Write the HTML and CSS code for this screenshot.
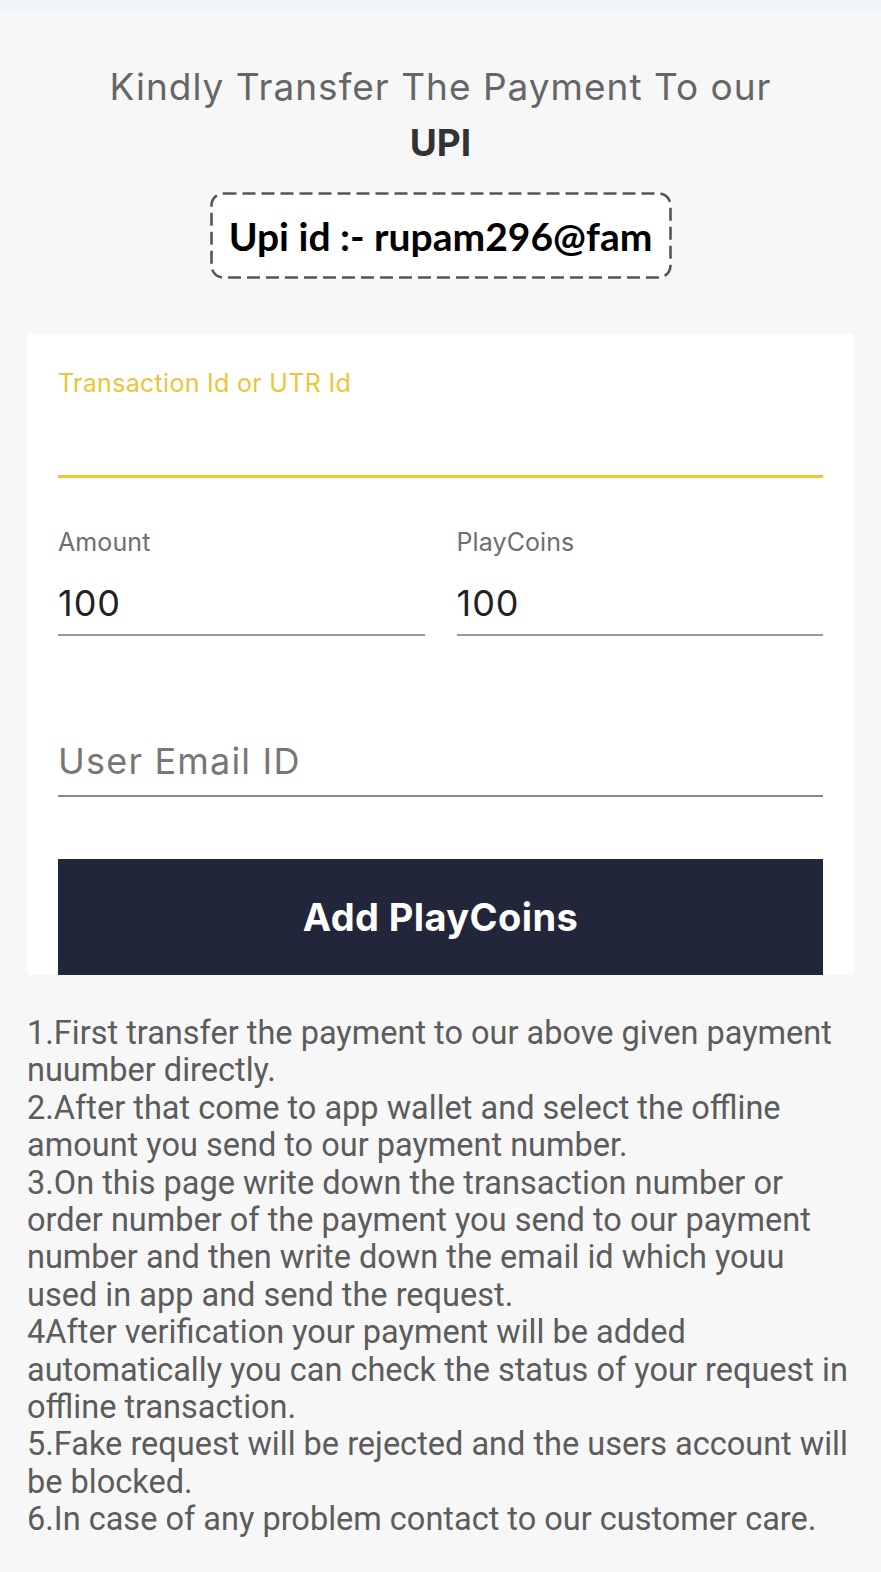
FILE: index.html
```html
<!DOCTYPE html>
<html>
<head>
<meta charset="utf-8">
<link rel="stylesheet" href="styles.css">
</head>
<body>
<div class="topbar"></div>
<main class="page">
  <h1 class="title">Kindly Transfer The Payment To our</h1>
  <h2 class="method">UPI</h2>
  <div class="upi-wrap"><div class="upi-box">Upi id :- rupam296@fam</div></div>
  <section class="card">
    <div class="field field-active">
      <label class="label label-active">Transaction Id or UTR Id</label>
    </div>
    <div class="row">
      <div class="field field-half">
        <label class="label">Amount</label>
        <div class="value">100</div>
      </div>
      <div class="field field-half">
        <label class="label">PlayCoins</label>
        <div class="value">100</div>
      </div>
    </div>
    <div class="field field-email">
      <div class="value placeholder">User Email ID</div>
    </div>
    <button class="btn">Add PlayCoins</button>
  </section>
  <div class="notes">
    <p>1.First transfer the payment to our above given payment nuumber directly.</p>
    <p>2.After that come to app wallet and select the offline amount you send to our payment number.</p>
    <p>3.On this page write down the transaction number or order number of the payment you send to our payment number and then write down the email id which youu used in app and send the request.</p>
    <p>4After verification your payment will be added automatically you can check the status of your request in offline transaction.</p>
    <p>5.Fake request will be rejected and the users account will be blocked.</p>
    <p>6.In case of any problem contact to our customer care.</p>
  </div>
</main>
</body>
</html>
```

FILE: styles.css
```css
* { box-sizing: border-box; }
html, body { margin: 0; padding: 0; }
body {
  background: #f7f7f7;
  font-family: Inter, "Noto Sans", sans-serif;
  width: 881px;
  height: 1572px;
  overflow: hidden;
}
.topbar { height: 10px; background: #f0f3f7; }
.page { padding: 0 27px; }
.title {
  margin: 49px 0 0;
  text-align: center;
  font-weight: 400;
  font-size: 37px;
  line-height: 56px;
  color: #666;
  letter-spacing: 1px;
  white-space: nowrap;
}
.method {
  margin: 0;
  text-align: center;
  font-weight: 700;
  font-size: 37px;
  line-height: 56px;
  color: #333;
}
.upi-wrap { display: flex; justify-content: center; margin-top: 21px; }
.upi-box {
  width: 462px;
  height: 87px;
  border-radius: 12px;
  background-color: #fff;
  background-image: url("data:image/svg+xml,%3Csvg xmlns='http://www.w3.org/2000/svg' width='462' height='87'%3E%3Crect x='1.5' y='1.5' width='459' height='84' rx='12' ry='12' fill='none' stroke='%23555' stroke-width='2.6' stroke-dasharray='13 6'/%3E%3C/svg%3E");
  display: flex;
  align-items: center;
  justify-content: center;
  font-family: Lato, sans-serif;
  font-weight: 700;
  font-size: 39px;
  color: #000;
  white-space: nowrap;
}
.card {
  margin-top: 55px;
  background: #fff;
  border-radius: 4px;
  padding: 34px 31px 0;
  height: 641px;
  display: flex;
  flex-direction: column;
}
.field { display: flex; flex-direction: column; }
.field-active { height: 110px; border-bottom: 3px solid #f0c72e; }
.label {
  font-size: 25px;
  line-height: 30px;
  color: #6e6e6e;
  letter-spacing: 0.1px;
}
.label-active { color: #ebc53a; letter-spacing: 0.3px; }
.row { display: flex; gap: 32px; margin-top: 49px; }
.field-half { flex: 1; border-bottom: 2px solid #999; height: 109px; }
.value {
  font-size: 36px;
  line-height: 56px;
  color: #222;
  margin-top: 18px;
  letter-spacing: 1px;
}
.field-email { margin-top: 97px; height: 64px; border-bottom: 2px solid #888; }
.placeholder { color: #777; margin-top: 0; letter-spacing: 1.2px; }
.btn {
  margin-top: 62px;
  height: 116px;
  border: none;
  background: #22263a;
  color: #fff;
  font-family: Inter, sans-serif;
  font-weight: 700;
  font-size: 38px;
  letter-spacing: 0.4px;
  width: 100%;
  padding: 0;
}
.notes {
  margin-top: 40px;
  font-family: Roboto, sans-serif;
  font-size: 32.5px;
  line-height: 37.4px;
  color: #5c5c5c;
}
.notes p { margin: 0; }
```
